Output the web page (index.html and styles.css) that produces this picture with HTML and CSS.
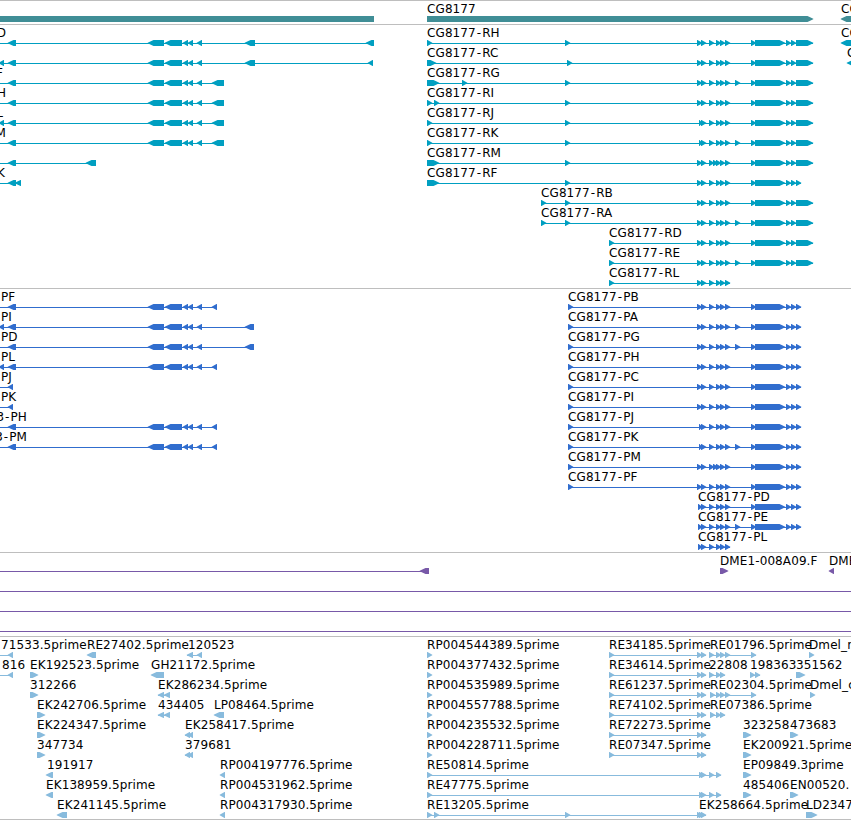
FILE: index.html
```html
<!DOCTYPE html>
<html lang="en">
<head>
  <meta charset="UTF-8" />
  <meta name="viewport" content="width=device-width, initial-scale=1.0"/>
  <title>CG8177</title>
  <link rel="stylesheet" href="styles.css">
</head>
<body>

  <main class="browser">
    <section class="track gene" id="genes"></section>
    <section class="track mrna" id="transcripts"></section>
    <section class="track cds" id="proteins"></section>
    <section class="track bac" id="bacs"></section>
    <section class="track est" id="ests"></section>
  </main>

  <script src="tracks.js"></script>

</body>
</html>
```

FILE: styles.css
```css
body {
  margin: 0;
  background: #ffffff;
  font-family: "DejaVu Sans", sans-serif;
}

.browser {
  display: flex;
  flex-direction: column;
  height: 819px;
  overflow: hidden;
  border-bottom: 1px solid #bebebe;
}

.track {
  box-sizing: border-box;
  border-top: 1px solid #bebebe;
  overflow: hidden;
}

.row {
  display: block;
  width: 100%;
  height: 20px;
  overflow: visible;
}

.row text {
  font-size: 12px;
  letter-spacing: 0.1px;
  fill: #000000;
}

.row text.end {
  text-anchor: end;
}

.gene {
  height: 24px;
  color: #408e96;
}

.mrna {
  height: 264px;
  color: #009fc1;
}

.cds {
  height: 264px;
  color: #306dce;
}

.bac {
  height: 84px;
  color: #7859a8;
}

.est {
  height: 183px;
  color: #88bbdd;
}

.exon,
.intron {
  fill: currentColor;
}
```

FILE: tracks.js
```js
// label, label x, strand, exons [start, end], optional line range
function f(label, x, strand, exons, line) {
  return { label: label, x: x, strand: strand, exons: exons, line: line };
}

// shared exon groups
const left = [[148, 164], [165, 182], [183, 188], [188, 193], [197, 202]];
const first = [[697, 702], [701, 706]];
const firstShort = [[699, 702], [701, 706]];
const mid = [[709, 714], [716, 721], [720, 725], [725, 730]];
const midExtra = [[709, 714], [713, 718], [716, 721], [720, 725], [725, 730]];
const opt = [[735, 740]];
const body = [[751, 756], [755, 785], [786, 791], [791, 796]];
const utr = [[796, 813]];
const last = [[796, 801]];

const full = [].concat(first, mid, body);
const fullOpt = [].concat(first, mid, opt, body);
const short = [].concat(firstShort, mid, body);
const shortOpt = [].concat(firstShort, mid, opt, body);
const extra = [].concat(first, midExtra, body);

function g(name, x, head, rest, tail) {
  return f('CG8177<tspan dx="0.9">-</tspan><tspan dx="1">' + name + '</tspan>', x, 1, [].concat(head, rest, tail || []));
}

function rev(label, x, exons, start) {
  const end = Math.max.apply(null, exons.map(e => e[1]));
  return f(label, x, -1, exons, [start === undefined ? 0 : start, end]);
}

const genes = [
  [f("", 0, 0, [[0, 374]]), f("CG8177", 427, 1, [[427, 813]]), f("CG", 841, -1, [[841, 870]])]
];

const transcripts = [
  [rev("D", 6, [[8, 16], ...left, [245, 255], [366, 374]]), g("RH", 427, [[427, 432], [565, 570]], full, utr), f("CG", 841, -1, [[841, 870]])],
  [rev("", 0, [[-1, 4], [8, 16], ...left, [245, 255], [368, 373]]), g("RC", 427, [[427, 436], [567, 572]], full, utr), f("C", 847, -1, [[847, 870]])],
  [rev("F", 3, [[8, 16], ...left, [212, 224]]), g("RG", 427, [[427, 439], [462, 467], [565, 570]], fullOpt, utr)],
  [rev("H", 6, [[8, 16], ...left, [212, 224]]), g("RI", 427, [[427, 432], [434, 439], [565, 570]], full, utr)],
  [rev("L", 3, [[-1, 4], [8, 16], ...left, [212, 224]]), g("RJ", 427, [[427, 432], [565, 570]], short, utr)],
  [rev("M", 6, [[8, 16], ...left, [212, 224]]), g("RK", 427, [[427, 432], [565, 570]], shortOpt, utr)],
  [rev("", 0, [[8, 16], [86, 96]]), g("RM", 427, [[427, 439], [565, 570]], extra, utr)],
  [rev("K", 5, [[8, 16], [15, 21]]), g("RF", 427, [[427, 439], [565, 570]], full, last)],
  [g("RB", 541, [[541, 546], [565, 570]], full, utr)],
  [g("RA", 541, [[541, 546], [565, 570]], fullOpt, utr)],
  [g("RD", 609, [[609, 614]], full, utr)],
  [g("RE", 609, [[609, 614]], fullOpt, utr)],
  [g("RL", 609, [[609, 614]], [].concat(first, mid))]
];
transcripts.forEach(r => { if (r[0].strand < 0) r[0].end = true; });

const p0 = [[568, 573]];
const d0 = [[698, 702], [701, 706]];
const proteins = [
  [rev("PF", 1, [[8, 16], ...left, [212, 217]]), g("PB", 568, p0, full, last)],
  [rev("PI", 1, [[-1, 4], [8, 16], ...left, [245, 254]]), g("PA", 568, p0, fullOpt, last)],
  [rev("PD", 1, [[8, 16], ...left, [245, 254]]), g("PG", 568, p0, fullOpt, last)],
  [rev("PL", 1, [[-1, 4], [8, 16], ...left, [212, 217]]), g("PH", 568, p0, full, last)],
  [rev("PJ", 1, [[8, 13]]), g("PC", 568, p0, full, last)],
  [rev("PK", 1, [[8, 13]]), g("PI", 568, p0, full, last)],
  [rev('3<tspan dx="0.9">-</tspan><tspan dx="1">PH</tspan>', 27, [[8, 16], ...left, [212, 217]]), g("PJ", 568, p0, short, last)],
  [rev('3<tspan dx="0.9">-</tspan><tspan dx="1">PM</tspan>', 27, [[8, 16], ...left, [212, 217]]), g("PK", 568, p0, shortOpt, last)],
  [g("PM", 568, p0, extra, last)],
  [g("PF", 568, p0, full, last)],
  [g("PD", 698, d0, [].concat(mid, body), last)],
  [g("PE", 698, d0, [].concat(mid, opt, body), last)],
  [g("PL", 698, d0, mid)]
];
proteins[6][0].end = true;
proteins[7][0].end = true;

const bacs = [
  [rev("", 0, [[420, 429]]), f("DME1-008A09.F", 720, 1, [[720, 728]]), f("DME", 829, -1, [[829, 834]])],
  [f("", 0, 0, [], [0, 851])],
  [f("", 0, 0, [], [0, 851])],
  [f("", 0, 0, [], [0, 851])]
];

const re = [[609, 614], [697, 702], [701, 706]];
const rp = [[427, 432]];
const ests = [
  [rev("71533.5prime", 1, [[8, 13]]), f("RE27402.5prime", 87, -1, [[87, 96]]), f("120523", 188, -1, [[187, 193], [197, 202]]),
   f("RP004544389.5prime", 427, 1, rp), f("RE34185.5prime", 609, 1, re), f("RE01796.5prime", 710, 1, [...mid, [751, 756]]), f("Dmel_n", 809, 1, [[809, 814]])],
  [rev("816", 2, [[8, 13]]), f("EK192523.5prime", 30, 1, [[30, 38]]), f("GH21172.5prime", 151, -1, [[151, 164]]),
   f("RP004377432.5prime", 427, 1, rp), f("RE34614.5prime", 609, 1, re), f("22808", 709, 1, mid.slice(0, 3)),
   f("198363", 750, 1, [[750, 755], [755, 760]]), f("351562", 796, 1, [[796, 805]])],
  [f("312266", 30, 1, [[30, 38]]), f("EK286234.5prime", 158, -1, [[158, 164], [164, 170]]),
   f("RP004535989.5prime", 427, 1, rp), f("RE61237.5prime", 609, 1, re), f("RE02304.5prime", 710, 1, [[710, 715], ...mid.slice(1), [751, 756]]), f("Dmel_c", 810, 1, [[810, 815]])],
  [f("EK242706.5prime", 37, 1, [[37, 45]]), f("434405", 158, -1, [[158, 164], [164, 170]]), f("LP08464.5prime", 214, -1, [[214, 224]]),
   f("RP004557788.5prime", 427, 1, rp), f("RE74102.5prime", 609, 1, re), f("RE07386.5prime", 710, 1, [[710, 715], [716, 721], [720, 725]])],
  [f("EK224347.5prime", 37, 1, [[37, 45]]), f("EK258417.5prime", 185, -1, [[185, 190], [188, 193]]),
   f("RP004235532.5prime", 427, 1, rp), f("RE72273.5prime", 609, 1, re), f("323258", 743, 1, [[743, 751]]), f("473683", 790, 1, [[790, 798]])],
  [f("347734", 37, 1, [[37, 45]]), f("379681", 185, -1, [[185, 190], [188, 193]]),
   f("RP004228711.5prime", 427, 1, rp), f("RE07347.5prime", 609, 1, re), f("EK200921.5prime", 743, 1, [[743, 751]])],
  [f("191917", 47, -1, [[46, 53]]), f("RP004197776.5prime", 220, -1, [[220, 225]]),
   f("RE50814.5prime", 427, 1, [[427, 432], [699, 704], [701, 706], [709, 714], [716, 721]]), f("EP09849.3prime", 743, 1, [[743, 751]])],
  [f("EK138959.5prime", 46, -1, [[46, 53]]), f("RP004531962.5prime", 220, -1, [[220, 225]]),
   f("RE47775.5prime", 427, 1, [[427, 432], [699, 704], [701, 706], [709, 714], [716, 721]]), f("485406", 743, 1, [[743, 751]]), f("EN00520.", 790, 1, [[790, 798]])],
  [f("EK241145.5prime", 57, -1, [[57, 67]]), f("RP004317930.5prime", 220, -1, [[220, 225]]),
   f("RE13205.5prime", 427, 1, [[427, 432], [434, 439], [565, 570], [697, 702], [699, 704], [701, 706]]), f("EK258664.5prime", 699, 1, []), f("LD2347", 806, 1, [[806, 817]])]
];

// block with a pointed end on the side of the strand
function exon(e, strand) {
  const a = e[0], b = e[1];
  const h = Math.min(b - a, 6);
  if (strand > 0) return `<path class="exon" d="M${a} 15H${b - h + 0.5}L${b + 0.3} 17.7V18.3L${b - h + 0.5} 21H${a}Z"/>`;
  if (strand < 0) return `<path class="exon" d="M${b} 15H${a + h - 0.5}L${a - 0.3} 17.7V18.3L${a + h - 0.5} 21H${b}Z"/>`;
  return `<path class="exon" d="M${a} 15H${b}V21H${a}Z"/>`;
}

function draw(id, rows) {
  document.getElementById(id).innerHTML = rows.map(row => {
    let out = '';
    row.forEach(t => {
      const line = t.line || (t.exons.length > 1 ? [t.exons[0][0], t.exons[t.exons.length - 1][1]] : null);
      if (line) out += `<rect class="intron" x="${line[0]}" y="18" width="${line[1] - line[0]}" height="1"/>`;
      out += t.exons.map(e => exon(e, t.strand)).join('');
      if (t.label) out += `<text${t.end ? ' class="end"' : ''} x="${t.x}" y="12">${t.label}</text>`;
    });
    return `<svg class="row">${out}</svg>`;
  }).join('');
}

draw('genes', genes);
draw('transcripts', transcripts);
draw('proteins', proteins);
draw('bacs', bacs);
draw('ests', ests);
```
